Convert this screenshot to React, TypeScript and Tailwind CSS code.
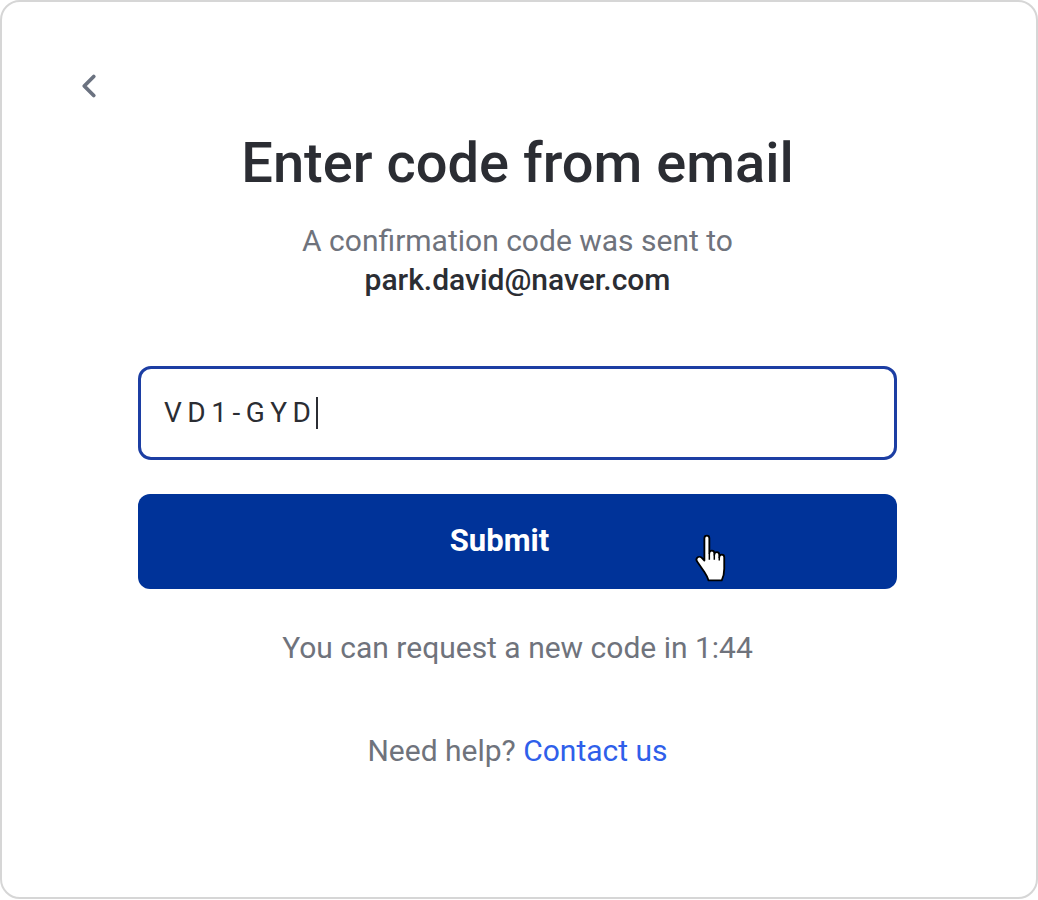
import { ChevronLeft } from 'lucide-react'

const HandCursor = () => (
  <svg
    width="36"
    height="48"
    viewBox="0 0 20 29"
    className="absolute left-[691px] top-[532px]"
  >
    <path
      d="M7.5 1 C6.7 1 6 1.7 6 2.5 V16 L4.3 14.3 C3.6 13.6 2.4 13.6 1.7 14.3 C1.1 14.9 1.1 15.9 1.6 16.6 L6 23 C7 24.5 8 26.5 8.5 28 H16.5 C17.5 26 18 24 18 21 V14 C18 13.2 17.3 12.5 16.5 12.5 C15.7 12.5 15 13.2 15 14 V12.5 C15 11.7 14.3 11 13.5 11 C12.7 11 12 11.7 12 12.5 V11.5 C12 10.7 11.3 10 10.5 10 C9.7 10 9 10.7 9 11.5 V2.5 C9 1.7 8.3 1 7.5 1 Z"
      fill="#fff"
      stroke="#000"
      strokeWidth="1.1"
      strokeLinejoin="round"
    />
    <path d="M9 11.5 V15.5 M12 12.5 V15.5 M15 14 V16" stroke="#000" strokeWidth="0.9" fill="none" />
  </svg>
)

export default function App() {
  return (
    <div className="bg-white w-[1038px] h-[900px] font-['Roboto',sans-serif]">
      <div className="relative h-[899px] w-[1038px] rounded-[20px] border-2 border-[#d6d6d6] bg-white">
        <div className="pl-[68px] pt-[65px]">
          <button className="text-[#6b7280]">
            <ChevronLeft size={38} strokeWidth={2.4} />
          </button>
        </div>
        <div className="ml-[136px] flex w-[759px] flex-col items-center">
          <h1 className="mt-[18px] text-[56px] leading-[67px] font-medium text-[#2b2d33]">
            Enter code from email
          </h1>
          <p className="mt-[24px] text-[30px] leading-[40px] text-[#6f737c]">
            A confirmation code was sent to
          </p>
          <p className="text-[30px] leading-[38px] font-medium text-[#2b2d33]">
            park.david@naver.com
          </p>
          <div className="mt-[67px] flex h-[94px] w-full items-center rounded-[13px] border-[3px] border-[#1c3ea3] px-[23px]">
            <span className="text-[28px] tracking-[5.5px] text-[#2b2d33]">VD1-GYD</span>
            <span className="h-[32px] w-[2px] bg-[#2b2d33]" />
          </div>
          <button className="mt-[34px] flex h-[95px] w-full items-center justify-center rounded-[12px] bg-[#003399] pr-[36px] text-[31px] font-bold text-white">
            Submit
          </button>
          <p className="mt-[39px] text-[30px] leading-[40px] text-[#6f737c]">
            You can request a new code in 1:44
          </p>
          <p className="mt-[63px] text-[30px] leading-[40px] text-[#6f737c]">
            Need help? <span className="text-[#2f5fea]">Contact us</span>
          </p>
        </div>
        <HandCursor />
      </div>
    </div>
  )
}
